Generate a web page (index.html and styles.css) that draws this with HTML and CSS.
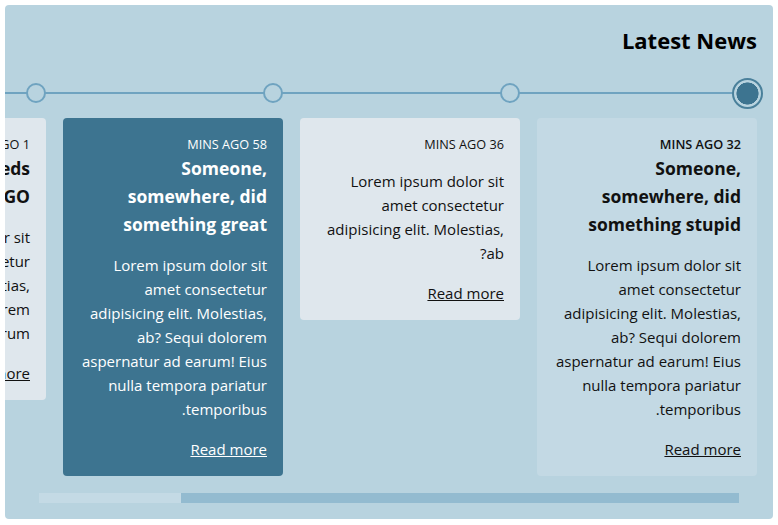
FILE: index.html
```html
<!DOCTYPE html>
<html lang="en">
<head>
<meta charset="utf-8">
<title>Latest News</title>
<link rel="stylesheet" href="styles.css">
</head>
<body>
<section class="news">
  <h2 class="news-title">Latest News</h2>
  <div class="track">
    <div class="item">
      <div class="dot-row"><span class="dot dot-active"></span></div>
      <article class="card card-current">
        <div class="meta">32 MINS AGO</div>
        <h3 class="card-title">Someone, somewhere, did something stupid</h3>
        <p class="card-body">Lorem ipsum dolor sit amet consectetur adipisicing elit. Molestias, ab? Sequi dolorem aspernatur ad earum! Eius nulla tempora pariatur temporibus.</p>
        <a class="more" href="#">Read more</a>
      </article>
    </div>
    <div class="item">
      <div class="dot-row"><span class="dot"></span></div>
      <article class="card card-light">
        <div class="meta">36 MINS AGO</div>
        <p class="card-body">Lorem ipsum dolor sit amet consectetur adipisicing elit. Molestias, ab?</p>
        <a class="more" href="#">Read more</a>
      </article>
    </div>
    <div class="item">
      <div class="dot-row"><span class="dot"></span></div>
      <article class="card card-dark">
        <div class="meta">58 MINS AGO</div>
        <h3 class="card-title">Someone, somewhere, did something great</h3>
        <p class="card-body">Lorem ipsum dolor sit amet consectetur adipisicing elit. Molestias, ab? Sequi dolorem aspernatur ad earum! Eius nulla tempora pariatur temporibus.</p>
        <a class="more" href="#">Read more</a>
      </article>
    </div>
    <div class="item">
      <div class="dot-row"><span class="dot"></span></div>
      <article class="card card-light">
        <div class="meta">1 HOUR AGO</div>
        <h3 class="card-title">Everyone succeeds LONG AGO</h3>
        <p class="card-body">Lorem ipsum dolor sit amet consectetur adipisicing elit. Molestias, ab? Sequi dolorem aspernatur ad earum</p>
        <a class="more" href="#">Read more</a>
      </article>
    </div>
  </div>
  <div class="scrollbar"><div class="thumb"></div></div>
</section>
</body>
</html>
```
FILE: styles.css
```css
html, body {
  margin: 0;
  background: #ffffff;
}
body {
  padding: 5px;
  font-family: "Open Sans", "Noto Sans", sans-serif;
}
.news {
  direction: rtl;
  width: 768px;
  box-sizing: border-box;
  background: #b8d3df;
  border-radius: 4px;
  padding: 20px 0 16px;
}
.news-title {
  margin: 0;
  padding: 0 16px;
  font-size: 22px;
  line-height: 30px;
  font-weight: 700;
  color: #000;
  text-align: right;
  direction: ltr;
}
.track {
  position: relative;
  display: flex;
  align-items: flex-start;
  gap: 17px;
  padding-right: 16px;
  margin-top: 23px;
  overflow: hidden;
}
.track::before {
  content: "";
  position: absolute;
  top: 14px;
  left: 0;
  right: 26px;
  height: 2px;
  background: #6fa3c0;
}
.item {
  flex: 0 0 220px;
  display: flex;
  flex-direction: column;
}
.dot-row {
  position: relative;
  height: 30px;
  display: flex;
  align-items: center;
  margin-bottom: 10px;
}
.dot {
  width: 20px;
  height: 20px;
  box-sizing: border-box;
  border: 2px solid #6fa3c0;
  border-radius: 50%;
  background: #b8d3df;
}
.dot-active {
  flex: 0 0 31px;
  width: 31px;
  height: 31px;
  margin-right: -5.5px;
  border: 2.5px solid #4a809b;
  background: radial-gradient(circle, #3d7490 0 10.8px, #b8d3df 11.3px);
}
.card {
  border-radius: 4px;
  padding: 16px 16px 15px;
  text-align: right;
  color: #111;
}
.card-current { background: #c3d9e4; }
.card-light { background: #dfe7ed; }
.card-dark { background: #3d7490; color: #fff; }
.meta {
  font-size: 12.7px;
  line-height: 20px;
  text-transform: uppercase;
}
.card-current .meta { font-weight: 600; }
.card-title {
  margin: 0;
  font-size: 17.5px;
  line-height: 28px;
  font-weight: 700;
}
.card-body {
  margin: 15px 0 16px;
  font-size: 15px;
  line-height: 24px;
}
.more {
  display: block;
  font-size: 15px;
  line-height: 24px;
  color: inherit;
  text-decoration: underline;
}
.scrollbar {
  margin: 17px 34px 0;
  height: 10px;
  background: #93bbd0;
  direction: ltr;
}
.thumb {
  width: 142px;
  height: 10px;
  background: #c4dae5;
}
```
